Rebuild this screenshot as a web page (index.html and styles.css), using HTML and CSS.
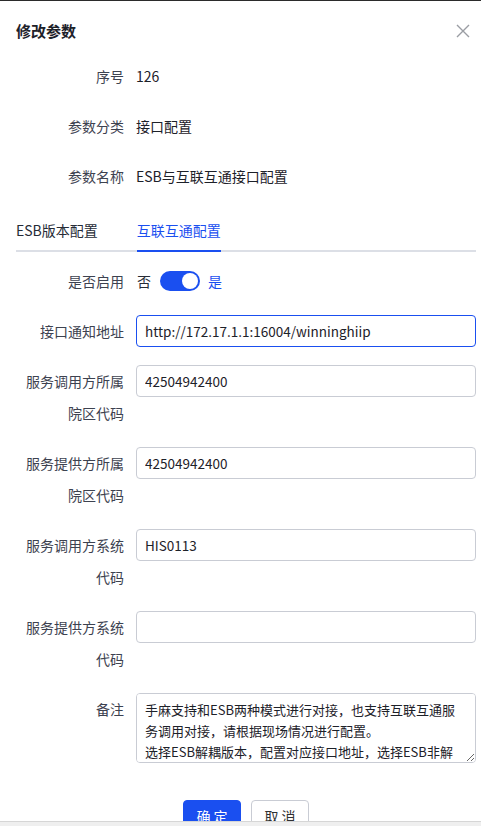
FILE: index.html
```html
<!DOCTYPE html>
<html lang="zh-CN">
<head>
    <meta charset="UTF-8">
    <meta name="viewport" content="width=device-width, initial-scale=1.0">
    <title>修改参数</title>
    <link rel="stylesheet" href="styles.css">
</head>
<body>
    <div class="dialog">
        <div class="dialog-header">
            <span class="dialog-title">修改参数</span>
            <button type="button" class="dialog-close" aria-label="关闭">
                <svg width="14" height="14" viewBox="0 0 14 14">
                    <path d="M1 1 L13 13 M13 1 L1 13" stroke="#9a9da3" stroke-width="1.4" fill="none"/>
                </svg>
            </button>
        </div>

        <div class="dialog-body">
            <div class="form-item">
                <label class="form-label">序号</label>
                <div class="form-content">126</div>
            </div>
            <div class="form-item">
                <label class="form-label">参数分类</label>
                <div class="form-content">接口配置</div>
            </div>
            <div class="form-item">
                <label class="form-label">参数名称</label>
                <div class="form-content">ESB与互联互通接口配置</div>
            </div>

            <div class="tabs">
                <div class="tab">ESB版本配置</div>
                <div class="tab active"><span class="tab-label">互联互通配置</span></div>
            </div>

            <div class="form-item">
                <label class="form-label">是否启用</label>
                <div class="form-content switch-wrap">
                    <span class="switch-text">否</span>
                    <span class="switch on"></span>
                    <span class="switch-text active">是</span>
                </div>
            </div>
            <div class="form-item">
                <label class="form-label" for="notify-url">接口通知地址</label>
                <div class="form-content">
                    <input type="text" id="notify-url" class="input focused" value="http://172.17.1.1:16004/winninghiip">
                </div>
            </div>
            <div class="form-item">
                <label class="form-label" for="caller-org">服务调用方所属院区代码</label>
                <div class="form-content">
                    <input type="text" id="caller-org" class="input" value="42504942400">
                </div>
            </div>
            <div class="form-item">
                <label class="form-label" for="provider-org">服务提供方所属院区代码</label>
                <div class="form-content">
                    <input type="text" id="provider-org" class="input" value="42504942400">
                </div>
            </div>
            <div class="form-item">
                <label class="form-label" for="caller-sys">服务调用方系统代码</label>
                <div class="form-content">
                    <input type="text" id="caller-sys" class="input" value="HIS0113">
                </div>
            </div>
            <div class="form-item">
                <label class="form-label" for="provider-sys">服务提供方系统代码</label>
                <div class="form-content">
                    <input type="text" id="provider-sys" class="input" value="">
                </div>
            </div>
            <div class="form-item">
                <label class="form-label" for="remark">备注</label>
                <div class="form-content">
                    <textarea id="remark" class="textarea">手麻支持和ESB两种模式进行对接，也支持互联互通服务调用对接，请根据现场情况进行配置。
选择ESB解耦版本，配置对应接口地址，选择ESB非解耦版本，配置ESB服务地址；选择互联互通配置，需填写接口通知地址及院区、系统代码。</textarea>
                </div>
            </div>
        </div>

        <div class="dialog-footer">
            <button type="button" class="btn btn-primary">确 定</button>
            <button type="button" class="btn">取 消</button>
        </div>
    </div>
    <div class="bottom-bar"></div>
</body>
</html>
```

FILE: styles.css
```css
html, body {
    margin: 0;
    padding: 0;
    height: 826px;
    overflow: hidden;
}

body {
    font-family: "Noto Sans CJK SC", "Noto Sans", sans-serif;
    font-size: 14px;
    color: #1d2129;
    background-color: #fff;
    border-top: 1px solid #2b2b2b;
    box-sizing: border-box;
}

.dialog {
    background-color: #fff;
}

.dialog-header {
    display: flex;
    align-items: center;
    justify-content: space-between;
    padding: 19px 11px 0 16px;
    height: 22px;
}

.dialog-title {
    font-size: 15px;
    font-weight: bold;
    color: #1d2129;
    line-height: 22px;
}

.dialog-close {
    background: none;
    border: none;
    padding: 0;
    width: 14px;
    height: 14px;
    cursor: pointer;
    display: flex;
}

.dialog-body {
    padding: 18px 5px 0 16px;
}

.form-item {
    display: flex;
    margin-bottom: 18px;
}

.form-label {
    width: 120px;
    flex-shrink: 0;
    box-sizing: border-box;
    padding-right: 12px;
    text-align: right;
    line-height: 32px;
    color: #3d4250;
}

.form-content {
    flex: 1;
    line-height: 32px;
    color: #1d2129;
    min-width: 0;
}

.tabs {
    display: flex;
    height: 40px;
    border-bottom: 2px solid #dcdfe6;
    margin-bottom: 13px;
}

.tab {
    padding: 0 20px;
    line-height: 40px;
    color: #262b36;
}

.tab:first-child {
    padding-left: 0;
}

.tab.active {
    color: #1a4ff0;
    padding-left: 19px;
}

.tab-label {
    display: inline-block;
    height: 40px;
    border-bottom: 2px solid #1a4ff0;
}

.switch-wrap {
    display: flex;
    align-items: center;
}

.switch-text {
    margin-left: 1px;
    color: #262b36;
}

.switch-text.active {
    color: #1a4ff0;
    margin-left: 8px;
}

.switch {
    position: relative;
    width: 40px;
    height: 20px;
    border-radius: 10px;
    background-color: #dcdfe6;
    margin-left: 9px;
}

.switch.on {
    background-color: #1a4ff0;
}

.switch::after {
    content: "";
    position: absolute;
    top: 2px;
    left: 2px;
    width: 16px;
    height: 16px;
    border-radius: 50%;
    background-color: #fff;
}

.switch.on::after {
    left: 22px;
}

.input {
    width: 100%;
    height: 32px;
    box-sizing: border-box;
    border: 1px solid #c9ccd4;
    border-radius: 4px;
    padding: 0 8px;
    font-family: inherit;
    font-size: 13.5px;
    color: #1d2129;
    outline: none;
    display: block;
}

.input.focused {
    border-color: #1a4ff0;
}

.textarea {
    width: 100%;
    height: 70px;
    box-sizing: border-box;
    border: 1px solid #c9ccd4;
    border-radius: 4px;
    padding: 5px 12px 5px 8px;
    font-family: inherit;
    font-size: 13px;
    line-height: 21px;
    color: #1d2129;
    display: block;
    outline: none;
    resize: vertical;
}

.textarea::-webkit-scrollbar {
    width: 8px;
}

.textarea::-webkit-scrollbar-thumb {
    background-color: #c1c1c1;
    border-radius: 4px;
    border: 1px solid #fff;
}

.dialog-footer {
    display: flex;
    justify-content: center;
    gap: 10px;
    padding: 19px 5px 0 16px;
}

.btn {
    width: 58px;
    height: 32px;
    border: 1px solid #c9ccd4;
    border-radius: 4px;
    background-color: #fff;
    color: #303133;
    font-family: inherit;
    font-size: 14px;
    cursor: pointer;
}

.btn-primary {
    background-color: #1a4ff0;
    border-color: #1a4ff0;
    color: #fff;
}

.bottom-bar {
    position: fixed;
    left: 0;
    right: 0;
    bottom: 0;
    height: 4px;
    background-color: #efefef;
    border-top: 1px solid #d6d6d6;
}
```
